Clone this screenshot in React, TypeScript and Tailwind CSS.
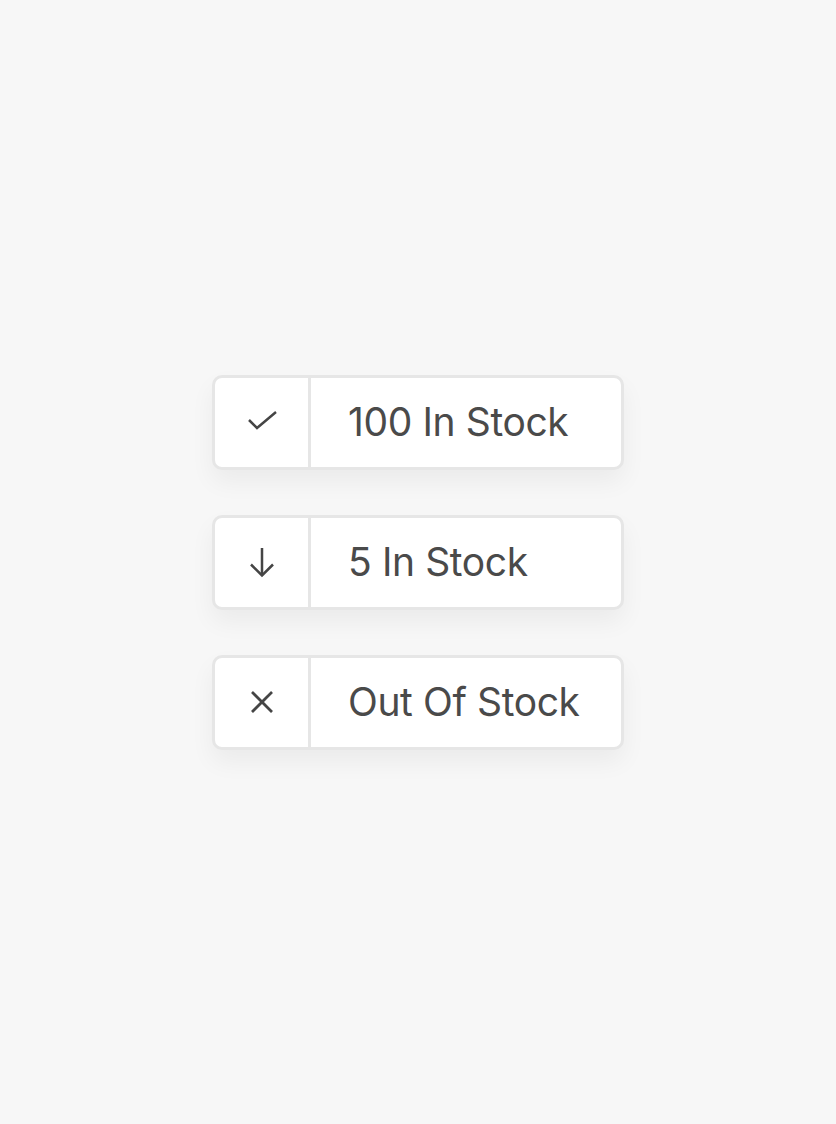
import React from "react";

function CheckIcon() {
  return (
    <svg width="32" height="32" viewBox="0 0 32 32" fill="none" stroke="#454545" strokeWidth="2.5" strokeLinecap="butt" strokeLinejoin="miter">
      <path d="M3 14 L11 22 L30 6" />
    </svg>
  );
}

function ArrowIcon() {
  return (
    <svg width="32" height="32" viewBox="0 0 32 32" fill="none" stroke="#454545" strokeWidth="2.5" strokeLinecap="butt" strokeLinejoin="miter">
      <path d="M16 2 V29" />
      <path d="M5 18.5 L16 29.5 L27 18.5" />
    </svg>
  );
}

function XIcon() {
  return (
    <svg width="32" height="32" viewBox="0 0 32 32" fill="none" stroke="#454545" strokeWidth="2.7" strokeLinecap="butt">
      <path d="M6 6 L26 26" />
      <path d="M26 6 L6 26" />
    </svg>
  );
}

function Row({ icon, label }: { icon: React.ReactNode; label: string }) {
  return (
    <div className="flex h-[95px] w-[412px] overflow-hidden rounded-[10px] border-[3px] border-[#e6e6e6] bg-white shadow-[0_12px_24px_rgba(0,0,0,0.05)]">
      <div className="flex w-[96px] shrink-0 items-center justify-center border-r-[3px] border-[#e6e6e6]">
        {icon}
      </div>
      <div className="flex flex-1 items-center pl-[37px] pb-[1px] text-[39px] leading-none tracking-[-0.01em] text-[#4a4a4a]" style={{ fontFamily: "Inter, 'Noto Sans', sans-serif" }}>
        {label}
      </div>
    </div>
  );
}

export default function App() {
  return (
    <div className="flex min-h-[1124px] w-full items-center justify-center bg-[#f7f7f7]">
      <div className="flex flex-col gap-[45px]">
        <Row icon={<CheckIcon />} label="100 In Stock" />
        <Row icon={<ArrowIcon />} label="5 In Stock" />
        <Row icon={<XIcon />} label="Out Of Stock" />
      </div>
    </div>
  );
}
